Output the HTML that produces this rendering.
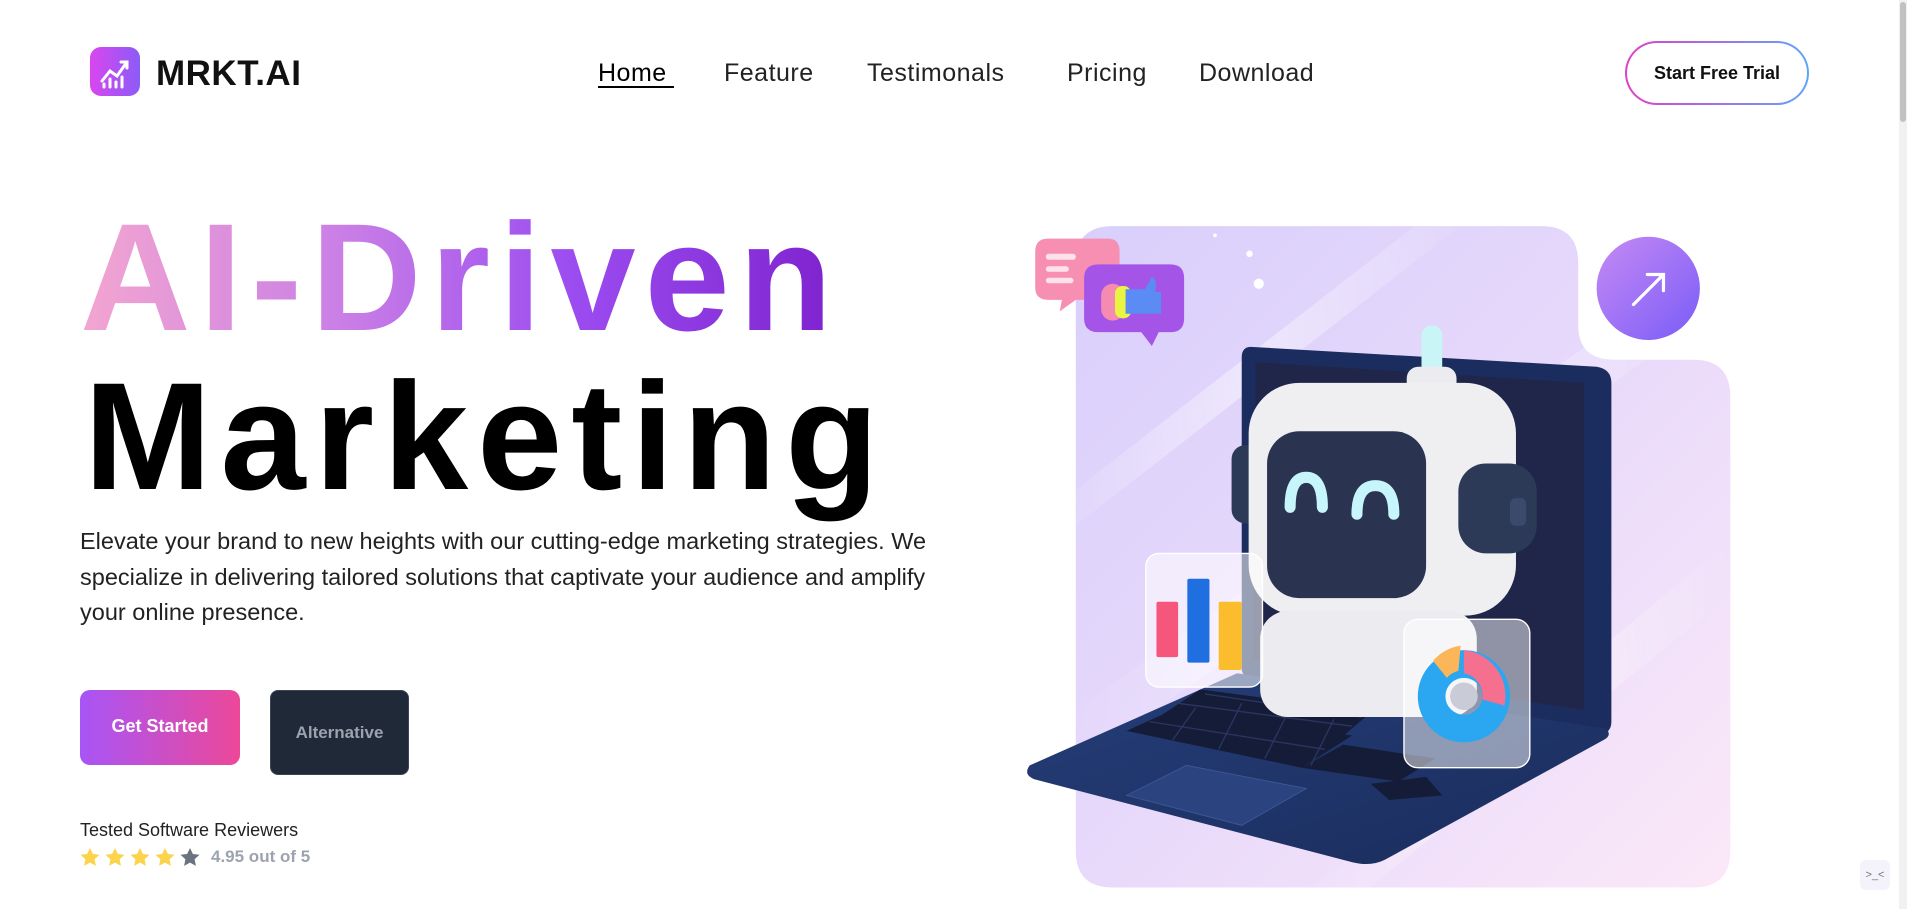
<!DOCTYPE html>
<html><head><meta charset="utf-8"><style>
*{margin:0;padding:0;box-sizing:border-box}
body{width:1907px;height:909px;overflow:hidden;background:#fff;font-family:"Liberation Sans",sans-serif;position:relative}
.abs{position:absolute}
.nav a{position:absolute;top:59px;font-size:25px;color:#222;text-decoration:none;letter-spacing:0.5px}
.h{position:absolute;left:80px;font-size:153px;font-weight:900;line-height:1;white-space:nowrap;letter-spacing:9px}
</style></head><body>
<div class="abs" style="left:90px;top:47px;width:50px;height:49px;border-radius:11px;background:linear-gradient(90deg,#d946ef,#8b5cf6)">
<svg width="50" height="49" viewBox="0 0 50 49"><g stroke="#fff" stroke-width="3" fill="none" stroke-linecap="round"><path d="M12 34 L20 24 L27 29 L37 15"/><path d="M31 15 H37 V21"/><path d="M14 40V37M20 40V32M26 40V35M32 40V30"/></g></svg></div>
<div class="abs" style="left:156px;top:54px;font-size:35px;font-weight:700;color:#111;letter-spacing:0.5px">MRKT.AI</div>
<div class="nav">
<a style="left:598px;color:#000">Home</a>
<a style="left:724px">Feature</a>
<a style="left:867px">Testimonals</a>
<a style="left:1067px">Pricing</a>
<a style="left:1199px">Download</a>
</div>
<div class="abs" style="left:598px;top:86px;width:76px;height:2px;background:#000"></div>
<div class="abs" style="left:1625px;top:41px;width:184px;height:64px;border-radius:32px;padding:2px;background:linear-gradient(90deg,#e040c8,#60a5fa)">
<div style="width:100%;height:100%;border-radius:30px;background:#fff;display:flex;align-items:center;justify-content:center;font-size:18px;font-weight:700;color:#111">Start Free Trial</div></div>
<div class="h" style="top:201px;background:linear-gradient(90deg,#f3a6d0 0%,#c97ee6 35%,#9b4cf0 65%,#7e22ce 100%);-webkit-background-clip:text;background-clip:text;color:transparent">AI-Driven</div>
<div class="h" style="top:360px;color:#000;left:84px">Marketing</div>
<div class="abs" style="left:80px;top:524px;width:875px;font-size:23.5px;line-height:35.5px;color:#222">Elevate your brand to new heights with our cutting-edge marketing strategies. We specialize in delivering tailored solutions that captivate your audience and amplify your online presence.</div>
<div class="abs" style="left:80px;top:690px;width:160px;height:75px;border-radius:10px;background:linear-gradient(90deg,#a855f7,#ec4899);color:#fff;font-weight:700;font-size:18px;text-align:center;line-height:72px">Get Started</div>
<div class="abs" style="left:270px;top:690px;width:139px;height:85px;border-radius:8px;background:#1f2937;border:1px solid #3b4556;color:#9ca3af;font-weight:700;font-size:17px;text-align:center;line-height:84px">Alternative</div>
<div class="abs" style="left:80px;top:820px;font-size:18px;color:#222">Tested Software Reviewers</div>
<div class="abs" style="left:79px;top:845px;display:flex;align-items:center">
<svg width="130" height="24" viewBox="0 0 130 24">
<defs><path id="st" d="M10 1 L12.9 7 L19.5 7.8 L14.6 12.3 L15.9 18.9 L10 15.6 L4.1 18.9 L5.4 12.3 L0.5 7.8 L7.1 7Z"/></defs>
<use href="#st" x="1" y="2" fill="#fcd34d"/><use href="#st" x="26" y="2" fill="#fcd34d"/><use href="#st" x="51" y="2" fill="#fcd34d"/><use href="#st" x="76" y="2" fill="#fcd34d"/><use href="#st" x="101" y="2" fill="#6b7280"/></svg>
<span style="font-size:17px;font-weight:700;color:#9ca3af;margin-left:2px">4.95 out of 5</span></div>
<svg class="abs" style="left:1020px;top:210px" width="720" height="690" viewBox="0 0 1560 1497">
<defs>
<linearGradient id="cg" x1="0" y1="0" x2="1" y2="1"><stop offset="0" stop-color="#d8cffb"/><stop offset="0.45" stop-color="#e6d8fb"/><stop offset="1" stop-color="#fbe8f8"/></linearGradient>
<linearGradient id="streak" x1="0" y1="0" x2="1" y2="0"><stop offset="0" stop-color="#fff" stop-opacity="0"/><stop offset="0.5" stop-color="#fff" stop-opacity="0.55"/><stop offset="1" stop-color="#fff" stop-opacity="0"/></linearGradient>
<linearGradient id="circ" x1="0" y1="0" x2="1" y2="1"><stop offset="0" stop-color="#c58af5"/><stop offset="1" stop-color="#7a5cf6"/></linearGradient>
<linearGradient id="base" x1="0" y1="0" x2="1" y2="1"><stop offset="0" stop-color="#253e78"/><stop offset="1" stop-color="#1a2c5c"/></linearGradient>
<clipPath id="cc"><path d="M200,35 H1130 Q1210,35 1210,115 V250 Q1210,325 1290,325 H1460 Q1540,325 1540,405 V1390 Q1540,1470 1460,1470 H200 Q120,1470 120,1390 V115 Q120,35 200,35 Z"/></clipPath>
</defs>
<path d="M200,35 H1130 Q1210,35 1210,115 V250 Q1210,325 1290,325 H1460 Q1540,325 1540,405 V1390 Q1540,1470 1460,1470 H200 Q120,1470 120,1390 V115 Q120,35 200,35 Z" fill="url(#cg)"/>
<g clip-path="url(#cc)" opacity="0.8">
<path d="M0,700 L900,0 L1000,0 L100,700Z" fill="url(#streak)"/>
<path d="M100,1100 L1500,100 L1560,180 L160,1180Z" fill="url(#streak)"/>
<path d="M600,1500 L1560,700 L1560,820 L720,1500Z" fill="url(#streak)"/>
</g>
<circle cx="497" cy="95" r="7" fill="#fff"/><circle cx="517" cy="160" r="11" fill="#fff"/><circle cx="422" cy="55" r="4" fill="#fff"/>
<circle cx="1362" cy="170" r="112" fill="url(#circ)"/>
<path d="M1330,205 L1393,142 M1360,140 H1395 V175" stroke="#fff" stroke-width="7" fill="none" stroke-linecap="round"/>
<path d="M60,62 H190 Q215,62 215,90 V170 Q215,195 190,195 H120 L85,220 L90,195 H60 Q32,195 32,168 V90 Q32,62 60,62Z" fill="#f78fb3"/>
<rect x="55" y="95" width="65" height="13" rx="6" fill="#fde2ec"/><rect x="55" y="122" width="50" height="12" rx="6" fill="#fde2ec"/><rect x="55" y="147" width="60" height="12" rx="6" fill="#fde2ec"/>
<path d="M170,118 H325 Q355,118 355,148 V235 Q355,265 325,265 H300 L285,295 L262,265 H170 Q138,265 138,235 V148 Q138,118 170,118Z" fill="#a455e8"/>
<rect x="175" y="160" width="50" height="80" rx="25" fill="#f58bb0"/><rect x="205" y="165" width="35" height="70" rx="16" fill="#e9f542"/><path d="M228,172 H270 L285,145 Q298,150 292,178 H305 V225 H228Z" fill="#5b8cf5"/>
<path d="M500,297 L1250,340 Q1282,345 1282,375 V1110 Q1282,1135 1255,1140 L490,1010 Q480,1008 480,995 V320 Q480,297 500,297Z" fill="#1b2d5e"/>
<path d="M510,330 L1222,375 V1085 L505,975Z" fill="#20264a"/>
<path d="M20,1205 L470,1005 L1270,1125 Q1285,1140 1265,1150 L790,1410 Q760,1425 720,1415 L30,1235 Q5,1225 20,1205Z" fill="url(#base)"/>
<path d="M230,1270 L360,1205 L620,1255 L480,1335Z" fill="#2b4480" stroke="#3b5796" stroke-width="2"/>
<g fill="#151c38">
<path d="M230,1130 L330,1085 L720,1140 L610,1210Z"/>
<path d="M300,1100 L390,1040 L760,1090 L690,1150Z"/>
<path d="M610,1210 L700,1160 L900,1190 L820,1240Z"/>
<path d="M760,1245 L880,1230 L915,1270 L800,1280Z"/>
</g>
<g stroke="#2a3560" stroke-width="3"><path d="M280,1110 L660,1170 M340,1070 L720,1120 M400,1050 L740,1100"/><path d="M380,1080 L330,1150 M480,1070 L430,1170 M580,1090 L530,1190 M680,1105 L630,1205"/></g>
<rect x="870" y="250" width="45" height="120" rx="22" fill="#c9f5f7"/>
<rect x="838" y="340" width="108" height="60" rx="25" fill="#ececf0"/>
<rect x="458" y="510" width="70" height="170" rx="30" fill="#2c3a58"/>
<rect x="495" y="375" width="580" height="505" rx="110" fill="#efeff2"/>
<rect x="535" y="480" width="345" height="362" rx="70" fill="#2a3350"/>
<path d="M585,645 Q585,580 620,580 Q655,580 655,645" stroke="#c6f6fb" stroke-width="24" fill="none" stroke-linecap="round"/>
<path d="M730,660 Q730,598 770,598 Q810,598 810,660" stroke="#c6f6fb" stroke-width="24" fill="none" stroke-linecap="round"/>
<rect x="950" y="550" width="170" height="195" rx="60" fill="#2c3a58"/>
<rect x="1062" y="625" width="35" height="60" rx="12" fill="#3b4a6b"/>
<rect x="520" y="870" width="470" height="230" rx="60" fill="#ececf0"/>
<rect x="272" y="745" width="253" height="290" rx="28" fill="#ffffff" fill-opacity="0.55" stroke="#fff" stroke-width="3"/>
<rect x="295" y="850" width="47" height="120" rx="4" fill="#f7567c"/>
<rect x="362" y="800" width="48" height="182" rx="4" fill="#1f6fe0"/>
<rect x="430" y="850" width="50" height="148" rx="4" fill="#fbbd2e"/>
<rect x="832" y="888" width="273" height="322" rx="30" fill="#ffffff" fill-opacity="0.5" stroke="#fff" stroke-width="3"/>
<circle cx="962" cy="1055" r="70" fill="none" stroke="#2aa7f0" stroke-width="60"/>
<path d="M962,955 A100,100 0 0 1 1050,1075 L1002,1062 A50,50 0 0 0 962,1005Z" fill="#f5708f"/>
<path d="M895,978 A100,100 0 0 1 955,945 L950,1000 A50,50 0 0 0 925,1015Z" fill="#fbb65a"/>
<circle cx="962" cy="1055" r="30" fill="#c9ccd6"/>
</svg>
<div class="abs" style="left:1899px;top:0;width:8px;height:909px;background:#f1f1f1"></div>
<div class="abs" style="left:1900px;top:2px;width:6px;height:120px;background:#c1c1c1;border-radius:3px"></div>
<div class="abs" style="left:1860px;top:860px;width:30px;height:30px;border-radius:6px;background:#f4f2fb;font-size:11px;color:#777;text-align:center;line-height:30px">&gt;_&lt;</div>
</body></html>
